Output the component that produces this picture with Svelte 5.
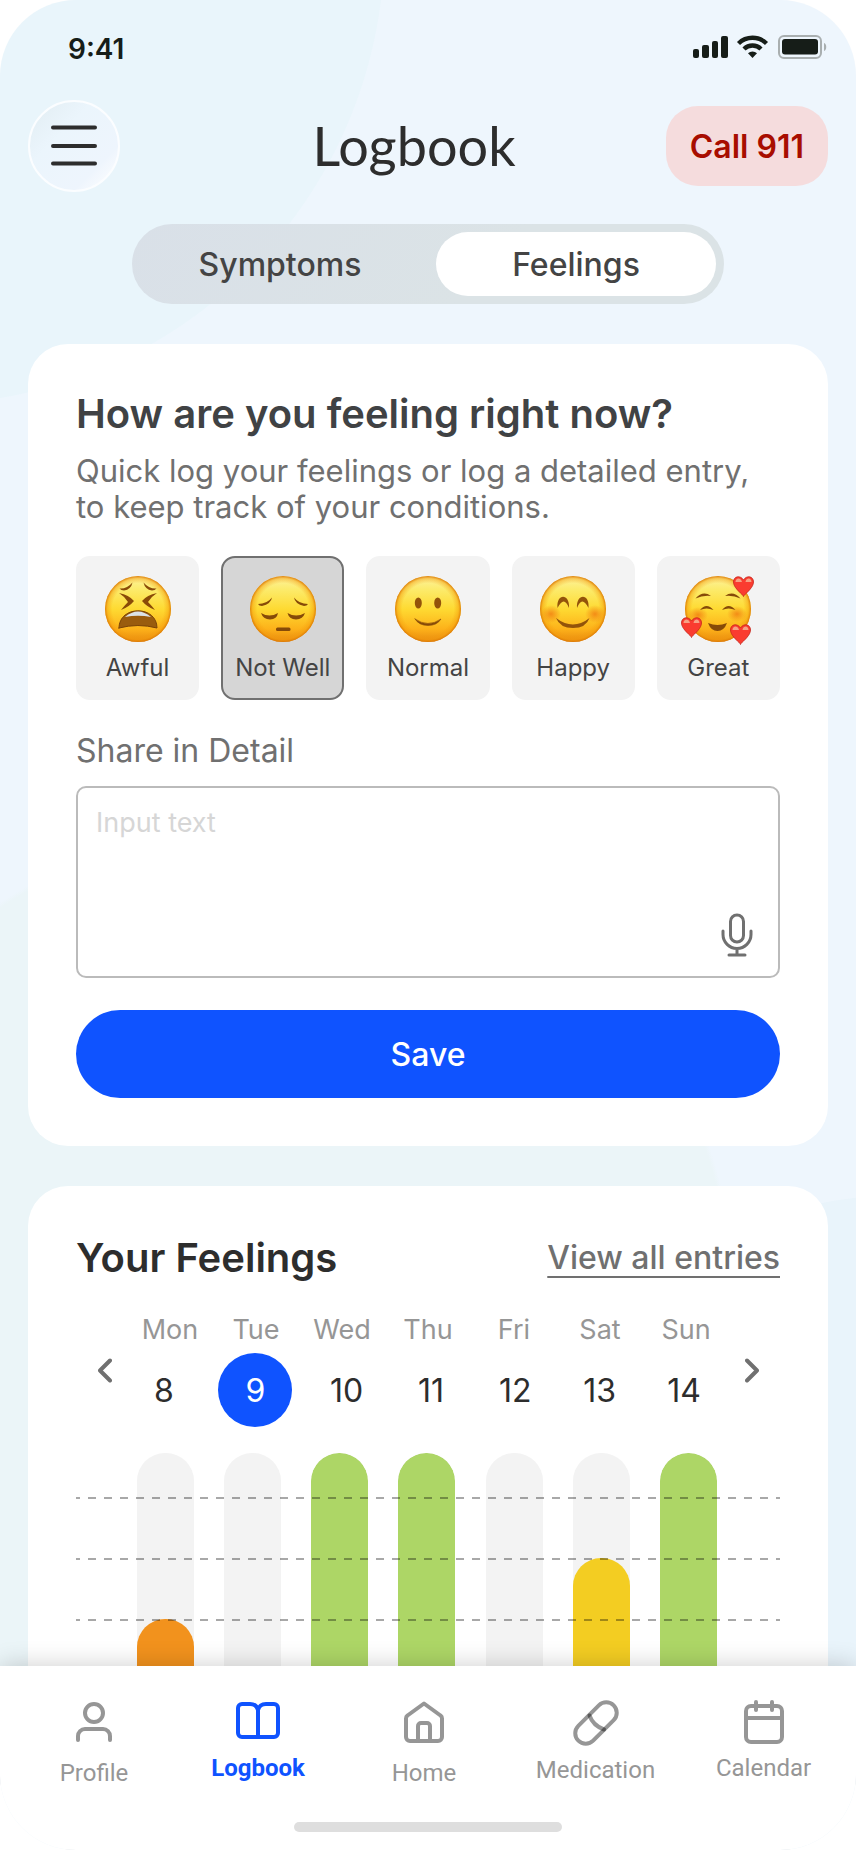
<script>
	let tabs = ['Symptoms', 'Feelings'];
	let activeTab = 'Feelings';

	let moods = ['Awful', 'Not Well', 'Normal', 'Happy', 'Great'];
	let selectedMood = 'Not Well';
	let detail = '';

	// level is the top of the bar, in px below the top of the track
	let week = [
		{ day: 'Mon', date: 8, color: '#F2921D', level: 166 },
		{ day: 'Tue', date: 9, color: null, level: 0 },
		{ day: 'Wed', date: 10, color: '#ADD666', level: 0 },
		{ day: 'Thu', date: 11, color: '#ADD666', level: 0 },
		{ day: 'Fri', date: 12, color: null, level: 0 },
		{ day: 'Sat', date: 13, color: '#F3CD22', level: 105 },
		{ day: 'Sun', date: 14, color: '#ADD666', level: 0 }
	];
	let selectedDate = 9;

	let links = ['Profile', 'Logbook', 'Home', 'Medication', 'Calendar'];
	let activeLink = 'Logbook';

	const heart = 'M0 10C-4 6 -10 1 -10 -4C-10 -10 -3 -11 0 -6C3 -11 10 -10 10 -4C10 1 4 6 0 10Z';
</script>

<div class="screen">
	<main>
		<div class="status-bar">
			<span class="time">9:41</span>
			<svg width="136" height="26" viewBox="0 0 136 26" fill="#161D18" aria-hidden="true">
				<rect x="1" y="15" width="6" height="9" rx="2" />
				<rect x="10" y="11" width="7" height="13" rx="2" />
				<rect x="20" y="7" width="6" height="17" rx="2" />
				<rect x="29" y="2" width="7" height="22" rx="2" />
				<g fill="none" stroke="#161D18" stroke-width="4.4">
					<path d="M46.5 9.5A20 20 0 0 1 74.5 9.5" />
					<path d="M52 15A12 12 0 0 1 69 15" />
				</g>
				<path d="M56 19.3A6.5 6.5 0 0 1 65 19.3L60.5 24Z" />
				<rect x="87" y="2" width="42" height="22" rx="5" fill="none" stroke="#A9AFB0" stroke-width="2" />
				<rect x="90" y="5" width="36" height="15.5" rx="3" />
				<path d="M132 9C135 10 135 16 132 17Z" fill="#A9AFB0" />
			</svg>
		</div>

		<header>
			<button class="menu" aria-label="Menu">
				<svg width="46" height="42" viewBox="0 0 46 42" stroke="#2D2D2D" stroke-width="4" stroke-linecap="round">
					<path d="M2 2.5H44M2 21H44M2 38.5H44" />
				</svg>
			</button>
			<h1>Logbook</h1>
			<button class="emergency">Call 911</button>
		</header>

		<div class="tabs">
			{#each tabs as tab}
				<button class:active={tab === activeTab} on:click={() => (activeTab = tab)}>{tab}</button>
			{/each}
		</div>

		<section class="card">
			<h2 class="question">How are you feeling right now?</h2>
			<p class="hint">Quick log your feelings or log a detailed entry, to keep track of your conditions.</p>

			<div class="moods">
				{#each moods as mood, i}
					<button class="mood" class:selected={mood === selectedMood} on:click={() => (selectedMood = mood)}>
						<svg width="66" height="66" viewBox="0 0 66 66" fill="none" stroke-linecap="round" aria-hidden="true">
							<defs>
								<linearGradient id="skin-{i}" x1="0" y1="0" x2="0" y2="1">
									<stop offset="0" stop-color="#FDF3A0" />
									<stop offset=".2" stop-color="#FCEB6C" />
									<stop offset=".5" stop-color="#FEDA32" />
									<stop offset=".8" stop-color="#FDB21A" />
									<stop offset="1" stop-color="#E8890F" />
								</linearGradient>
								<radialGradient id="rim-{i}">
									<stop offset=".78" stop-color="#F39A0C" stop-opacity="0" />
									<stop offset=".92" stop-color="#F39A0C" stop-opacity=".45" />
									<stop offset="1" stop-color="#D97706" stop-opacity=".95" />
								</radialGradient>
								<radialGradient id="blush-{i}">
									<stop offset="0" stop-color="#F0760F" stop-opacity=".75" />
									<stop offset="1" stop-color="#F0760F" stop-opacity="0" />
								</radialGradient>
							</defs>
							<circle cx="33" cy="33" r="33" fill="url(#skin-{i})" />
							<circle cx="33" cy="33" r="33" fill="url(#rim-{i})" />

							{#if mood === 'Awful'}
								<g fill="#8A4B08">
									<path d="M14.5 12.5Q22 13 27.5 6.5Q26 13.5 19 14.5Q16 14.5 14.5 12.5Z" />
									<path d="M51.5 12.5Q44 13 38.5 6.5Q40 13.5 47 14.5Q50 14.5 51.5 12.5Z" />
									<path d="M14 17Q24 19 29 25Q24 31 16 34Q20 29 23 26Q19 20 14 17Z" />
									<path d="M52 17Q42 19 37 25Q42 31 50 34Q46 29 43 26Q47 20 52 17Z" />
								</g>
								<path d="M14 52C14 29 52 29 52 52Q33 47 14 52Z" fill="#9A5C0E" stroke="#7A4307" stroke-linejoin="round" />
								<path d="M20 41Q33 30 46 41Q33 38.5 20 41Z" fill="#DCE3E8" />
							{:else if mood === 'Not Well'}
								<g fill="#864A08">
									<path d="M8 28Q17 28 22 21.5Q21 28 12 30Q9 30 8 28Z" />
									<path d="M58 28Q49 28 44 21.5Q45 28 54 30Q57 30 58 28Z" />
									<path d="M11 37Q19.5 42 28 37Q27 43 20 43.5Q13 43 11 37Z" />
									<path d="M37.5 37Q46 42 55 37Q53 43 46 43.5Q39 43 37.5 37Z" />
									<rect x="26" y="51.5" width="14.5" height="3.5" rx="1.5" />
								</g>
							{:else if mood === 'Normal'}
								<ellipse cx="23.3" cy="27" rx="3.5" ry="5.5" fill="#93530A" />
								<ellipse cx="42.7" cy="27" rx="3.5" ry="5.5" fill="#93530A" />
								<path d="M20 43Q33 52 46 43Q42 49.5 33 49.5Q24 49.5 20 43Z" fill="#864A08" stroke="#864A08" stroke-width=".6" />
							{:else if mood === 'Happy'}
								<ellipse cx="11" cy="38" rx="10" ry="9" fill="url(#blush-{i})" />
								<ellipse cx="55" cy="38" rx="10" ry="9" fill="url(#blush-{i})" />
								<g fill="#93530A">
									<path d="M17.5 32C16 17 30 17 29 32Q24 19 17.5 32Z" />
									<path d="M37 32C36 17 50 17 48.5 32Q42 19 37 32Z" />
									<path d="M16 42Q33 55 49.5 42Q46 52 33 52Q20 52 16 42Z" />
								</g>
							{:else}
								<ellipse cx="13" cy="39" rx="10" ry="8" fill="url(#blush-{i})" />
								<ellipse cx="52" cy="38" rx="10" ry="8" fill="url(#blush-{i})" />
								<g fill="#864A08">
									<path d="M10.5 22.5Q18 14 26 20Q18 19 10.5 22.5Z" />
									<path d="M55.5 22.5Q48 14 40 20Q48 19 55.5 22.5Z" />
									<path d="M15 34Q21.5 26 28.5 34Q21.5 31 15 34Z" />
									<path d="M37 34Q43.5 26 50.5 34Q43.5 31 37 34Z" />
									<path d="M23 47Q32.5 51 42 47Q39 55 32.5 55Q26 55 23 47Z" />
								</g>
								{#each [[58.5, 10], [6.5, 51], [55.5, 58]] as [x, y]}
									<g transform="translate({x} {y})">
										<path d={heart} fill="#FA3C30" stroke="#C4241B" stroke-width=".8" />
										<path d="M-8 -4C-8 -8 -3 -9 -1.5 -4ZM2 -4C3 -9 8 -8 8 -4Z" fill="#F6A184" />
									</g>
								{/each}
							{/if}
						</svg>
						<span>{mood}</span>
					</button>
				{/each}
			</div>

			<label for="detail">Share in Detail</label>
			<div class="detail-box">
				<textarea id="detail" placeholder="Input text" bind:value={detail}></textarea>
				<button class="mic" aria-label="Record">
					<svg width="32" height="44" viewBox="0 0 32 44" fill="none" stroke="#707070" stroke-width="3" stroke-linecap="round">
						<rect x="9.5" y="2" width="13" height="27" rx="6.5" />
						<path d="M2 18V21.5A14 14 0 0 0 30 21.5V18M16 36V42M8 42H24" />
					</svg>
				</button>
			</div>
			<button class="save">Save</button>
		</section>

		<section class="card">
			<div class="card-head">
				<h2>Your Feelings</h2>
				<a href="#entries">View all entries</a>
			</div>

			<div class="calendar">
				<button class="arrow prev" aria-label="Previous week">
					<svg width="14" height="25" viewBox="0 0 14 25" fill="none" stroke="#707070" stroke-width="4" stroke-linecap="round" stroke-linejoin="round"><path d="M12 2.5L2 12.5L12 22.5" /></svg>
				</button>
				<div class="days">
					<div class="weekdays">
						{#each week as { day }}
							<span>{day}</span>
						{/each}
					</div>
					<div class="dates">
						{#each week as { date }}
							<button class:selected={date === selectedDate} on:click={() => (selectedDate = date)}>{date}</button>
						{/each}
					</div>
				</div>
				<button class="arrow next" aria-label="Next week">
					<svg width="14" height="25" viewBox="0 0 14 25" fill="none" stroke="#707070" stroke-width="4" stroke-linecap="round" stroke-linejoin="round"><path d="M2 2.5L12 12.5L2 22.5" /></svg>
				</button>
			</div>

			<div class="chart">
				{#each week as { color, level }}
					<div class="track">
						{#if color}
							<div class="bar" style="top: {level}px; background: {color}"></div>
						{/if}
					</div>
				{/each}
				<div class="grid-lines">
					<i></i><i></i><i></i><i></i>
				</div>
			</div>
		</section>
	</main>

	<nav>
		<div class="links">
			{#each links as link}
				<a href="#{link.toLowerCase()}" class:active={link === activeLink}>
					{#if link === 'Profile'}
						<svg width="36" height="49" viewBox="0 0 36 49">
							<circle cx="18" cy="13" r="9" />
							<path d="M2 40V36A7 7 0 0 1 9 29H27A7 7 0 0 1 34 36V40" />
						</svg>
					{:else if link === 'Logbook'}
						<svg width="44" height="44" viewBox="0 0 44 44">
							<path d="M22 10C21 6 18 4 14 4H6A4 4 0 0 0 2 8V33A4 4 0 0 0 6 37H38A4 4 0 0 0 42 33V8A4 4 0 0 0 38 4H30C26 4 23 6 22 10V37" />
						</svg>
					{:else if link === 'Home'}
						<svg width="40" height="49" viewBox="0 0 40 49">
							<path d="M20 3.5L3.5 15.5Q2 16.5 2 18.5V37A4 4 0 0 0 6 41H34A4 4 0 0 0 38 37V18.5Q38 16.5 36.5 15.5Z" />
							<path d="M14 41V26A3 3 0 0 1 17 23H23A3 3 0 0 1 26 26V41" />
						</svg>
					{:else if link === 'Medication'}
						<!-- see-through strokes, so the seam darkens where it meets the shell -->
						<svg class="pill" width="46" height="46" viewBox="0 0 46 46">
							<rect x="-2" y="12.5" width="50" height="21" rx="10.5" transform="rotate(-45 23 23)" />
							<path d="M16.5 15.5Q20 25.5 31 29.5" />
						</svg>
					{:else}
						<svg width="40" height="44" viewBox="0 0 40 44">
							<rect x="2" y="6" width="36" height="36" rx="5" />
							<path d="M12 2V10M28 2V10M2 18H38" />
						</svg>
					{/if}
					<span>{link}</span>
				</a>
			{/each}
		</div>
		<div class="home-indicator"></div>
	</nav>
</div>

<style>
	:global(body) {
		background: #FFF;
	}

	* {
		box-sizing: border-box;
	}

	.screen {
		display: flex;
		flex-direction: column;
		height: 100vh;
		overflow: hidden;

		border-radius: 76px;
		background:
			radial-gradient(circle 462px at -77px -57px, #E9F5FB 99.8%, transparent 100%),
			radial-gradient(circle 475px at 260px 1300px, #EBF5F8 99%, transparent 100%),
			radial-gradient(circle 405px at 900px 1600px, #E9F4FB 99.8%, transparent 100%),
			#EEF6FD;

		font-family: Inter, "Liberation Sans", sans-serif;
		color: #2D2D2D;
	}

	button {
		padding: 0;
		border: 0;
		background: none;
		color: inherit;
		font: inherit;
		cursor: pointer;
	}

	h1, h2, p {
		margin: 0;
	}

	main {
		flex: 1;
		min-height: 0;
		overflow: hidden;
	}

	.status-bar {
		display: flex;
		align-items: center;
		justify-content: space-between;

		height: 100px;
		padding: 0 28px 2px 68px;
	}

	.time {
		font-size: 28px;
		font-weight: 600;
		color: #161D18;
	}

	.status-bar svg {
		margin-bottom: 4px;
	}

	header {
		display: grid;
		grid-template-columns: 1fr auto 1fr;
		align-items: center;

		padding: 0 28px;
	}

	h1 {
		padding-right: 28px;

		font-family: Lato, sans-serif;
		font-size: 54px;
		font-weight: 400;
		line-height: 60px;
	}

	.menu {
		display: flex;
		align-items: center;
		justify-content: center;

		width: 92px;
		height: 92px;

		border: 2px solid #FBFDFF;
		border-radius: 50%;
		background: linear-gradient(135deg, #E4EFF5 10%, #EBF5FC 35%, #EEF5FD 75%, #FFF 98%);
	}

	.emergency {
		justify-self: end;

		height: 80px;
		padding: 0 24px;

		border-radius: 32px;
		background: #F5DCDD;
		color: #A80D00;
		font-size: 32px;
		font-weight: 600;
	}

	.tabs {
		display: grid;
		grid-template-columns: 1fr 1fr;

		height: 80px;
		margin: 32px 132px 40px;

		border-radius: 40px;
		background: linear-gradient(135deg, #D9E0E8, #DBE3E6 60%);
	}

	.tabs button {
		border-radius: 32px;
		color: #444;
		font-size: 32px;
		font-weight: 500;
	}

	.tabs .active {
		margin: 8px;

		background: #FFF;
	}

	.card {
		margin: 0 28px 40px;
		padding: 48px;

		border-radius: 40px;
		background: #FFF;
	}

	h2 {
		font-size: 40px;
		font-weight: 600;
		line-height: 48px;
	}

	.question {
		line-height: 44px;
		color: #404244;
	}

	.hint {
		margin: 17px 0 31px;

		font-size: 31px;
		line-height: 36px;
		color: #707070;
	}

	.moods {
		display: grid;
		grid-template-columns: repeat(5, 1fr);
		gap: 22px;
	}

	.mood {
		display: flex;
		flex-direction: column;
		align-items: center;
		gap: 12px;

		padding: 18px 0 16px;

		border: 2px solid #F3F3F3;
		border-radius: 14px;
		background: #F3F3F3;
		font-size: 24px;
		line-height: 28px;
		color: #444;
		white-space: nowrap;
	}

	.mood.selected {
		border-color: #707070;
		background: #D6D6D6;
	}

	.mood svg {
		overflow: visible;
	}

	label {
		display: block;
		margin: 33px 0 17px;

		font-size: 32px;
		line-height: 36px;
		color: #707070;
	}

	.detail-box {
		position: relative;
	}

	textarea {
		display: block;
		width: 100%;
		height: 192px;
		padding: 18px;

		border: 2px solid #BBB;
		border-radius: 10px;
		outline: 0;
		background: transparent;
		font-family: inherit;
		font-size: 27px;
		line-height: 34px;
		color: #444;
		resize: none;
	}

	textarea::placeholder {
		color: #D6D6D6;
	}

	.mic {
		position: absolute;
		right: 27px;
		bottom: 21px;

		display: flex;
	}

	.save {
		width: 100%;
		height: 88px;
		margin-top: 32px;

		border-radius: 44px;
		background: #0F53FF;
		color: #FFF;
		font-size: 32px;
		font-weight: 500;
	}

	.card-head {
		display: flex;
		align-items: center;
		justify-content: space-between;

		margin-bottom: 32px;
	}

	.card-head a {
		font-size: 32px;
		font-weight: 500;
		line-height: 36px;
		color: #707070;
		text-decoration-thickness: 2px;
		text-underline-offset: 7px;
		text-decoration-skip-ink: none;
	}

	.calendar {
		display: grid;
		grid-template-columns: 51px 1fr 51px;
	}

	.arrow {
		display: flex;
		align-items: center;
		justify-content: center;
	}

	.prev {
		padding-left: 6px;
	}

	.next {
		padding-right: 6px;
	}

	.weekdays {
		display: grid;
		grid-template-columns: repeat(7, 1fr);

		font-size: 27px;
		line-height: 32px;
		color: #969696;
		text-align: center;
	}

	.dates {
		display: flex;
		align-items: center;
		justify-content: space-between;

		height: 74px;
		margin-top: 7px;
		padding: 0 15px 0 7px;

		font-size: 32px;
	}

	.dates button {
		width: 60px;
		height: 60px;
	}

	.dates .selected {
		width: 74px;
		height: 74px;

		border-radius: 50%;
		background: #0F53FF;
		color: #FFF;
	}

	.chart {
		position: relative;

		display: flex;
		justify-content: space-between;

		height: 288px;
		margin-top: 26px;
		padding: 0 63px 0 61px;
	}

	.track {
		position: relative;

		width: 57px;
		overflow: hidden;

		border-radius: 28px 28px 0 0;
		background: #F3F3F3;
	}

	.bar {
		position: absolute;
		right: 0;
		bottom: 0;
		left: 0;

		border-radius: 28px 28px 0 0;
	}

	.grid-lines {
		position: absolute;
		inset: 44px 0 0;

		display: flex;
		flex-direction: column;
		gap: 59px;
	}

	.grid-lines i {
		height: 2px;

		background: repeating-linear-gradient(90deg, rgba(0, 0, 0, .34) 0 4px, transparent 4px 12px, rgba(0, 0, 0, .34) 12px 16px);
	}

	nav {
		position: relative;

		padding: 34px 12px 18px;

		background: #FFF;
		box-shadow: 0 0 24px rgba(0, 0, 0, .2);
	}

	.links {
		display: grid;
		grid-template-columns: 164fr 164fr 168fr 175fr 161fr;

		height: 122px;
	}

	.links a {
		display: flex;
		flex-direction: column;
		align-items: center;
		gap: 10px;

		font-family: Roboto, sans-serif;
		font-size: 24px;
		line-height: 28px;
		color: #969696;
		text-decoration: none;
	}

	.links svg {
		fill: none;
		stroke: currentColor;
		stroke-width: 4;
		stroke-linecap: round;
		stroke-linejoin: round;
	}

	.links .pill {
		stroke: rgba(0, 0, 0, .41);
	}

	.links .active {
		font-weight: 700;
		color: #0F53FF;
	}

	.home-indicator {
		width: 268px;
		height: 10px;
		margin: 0 auto;

		border-radius: 5px;
		background: #DEDEDE;
	}
</style>
